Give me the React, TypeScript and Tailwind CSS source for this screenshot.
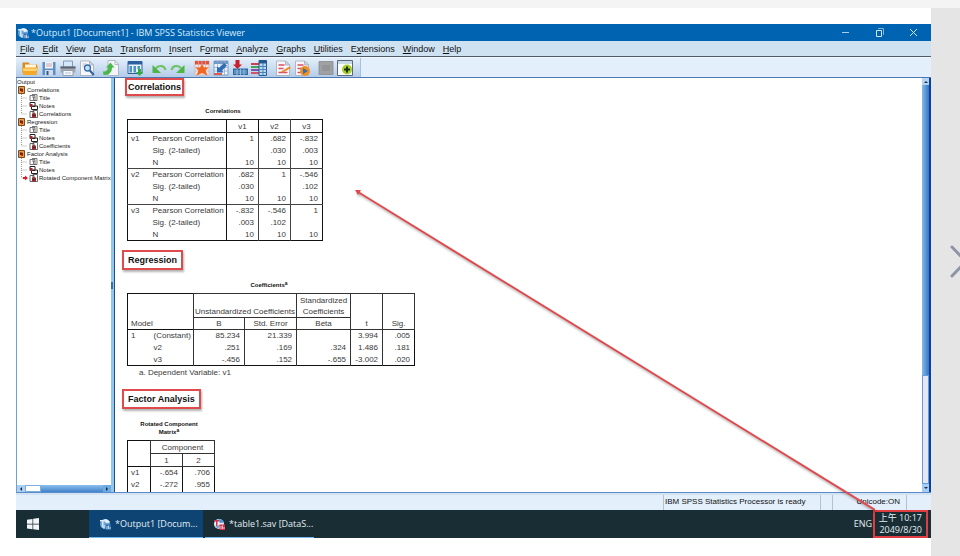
import type { ReactNode } from "react";

const menus: [string, string, string][] = [
  ["", "F", "ile"],
  ["", "E", "dit"],
  ["", "V", "iew"],
  ["", "D", "ata"],
  ["", "T", "ransform"],
  ["", "I", "nsert"],
  ["F", "o", "rmat"],
  ["", "A", "nalyze"],
  ["", "G", "raphs"],
  ["", "U", "tilities"],
  ["E", "x", "tensions"],
  ["", "W", "indow"],
  ["", "H", "elp"],
];

const Page = () => (
  <>
    <path d="M1.500 1h9l4 4v10.500h-13z" fill="#f7f7fa" stroke="#a3abba" strokeWidth=".8" />
    <path d="M10.500 1v4h4z" fill="#d5dae4" stroke="#a3abba" strokeWidth=".8" />
  </>
);

const toolGroups: { label: string; art: ReactNode }[][] = [
  [
    {
      label: "Open",
      art: (
        <>
          <path d="M.5 2.500h6l1.500 2h7v8H.5z" fill="#d98a1c" />
          <path d="M3 4.500h11v4H3z" fill="#fff6dc" />
          <path d="M0 7.500h13l3-1.500-1.500 9H1z" fill="#f3a82c" />
          <path d="M1 8.500h12.500l1.500-.7-.6 3.200H1.400z" fill="#fcd272" />
        </>
      ),
    },
    {
      label: "Save",
      art: (
        <>
          <path d="M1.500 2h13v13h-13z" fill="#5e8ec6" />
          <path d="M4 2h8v6.500H4z" fill="#f1f4f9" />
          <path d="M5 4h6M5 6h6" stroke="#c08a9a" strokeWidth=".8" />
          <path d="M4 10h8v5H4z" fill="#d5dbe4" />
          <path d="M5.500 11h2v4h-2z" fill="#335a91" />
        </>
      ),
    },
    {
      label: "Print",
      art: (
        <>
          <path d="M3.500 1h9v6h-9z" fill="#d3e9fb" stroke="#71869d" strokeWidth=".8" />
          <path d="M.5 6.500h15v6H.5z" fill="#a3abb5" />
          <path d="M.5 6.500h15v2H.5z" fill="#5b636e" />
          <path d="M3 10.500h10v5H3z" fill="#f5f8fb" stroke="#87919e" strokeWidth=".8" />
          <path d="M5 13h6" stroke="#9fb6cf" strokeWidth=".8" />
        </>
      ),
    },
    {
      label: "Print Preview",
      art: (
        <>
          <Page />
          <path d="M3.500 4h4M3.500 6h2" stroke="#b5bcc9" />
          <circle cx="8.500" cy="8" r="3" fill="#bfe0f7" stroke="#386ba5" strokeWidth="1.300" />
          <path d="M10.800 10.500l4 4.500" stroke="#3264a4" strokeWidth="2.200" />
        </>
      ),
    },
  ],
  [
    {
      label: "Export",
      art: (
        <>
          <path d="M5 .5h7l3.500 4v11H5z" fill="#f4f5f9" stroke="#a3abba" strokeWidth=".8" />
          <path d="M12 .5v4h3.500" fill="none" stroke="#a3abba" strokeWidth=".8" />
          <path d="M0 10.500c4 0 5-2 5-4H3l4.500-5 4 5H9c0 5-3.500 8-8.500 7.500z" fill="#4cb84c" transform="translate(0 1)" />
        </>
      ),
    },
  ],
  [
    {
      label: "Recall Dialog",
      art: (
        <>
          <path d="M1 1.500h14v12H1z" fill="#e8f3fb" stroke="#2d5f9e" />
          <path d="M1 1.500h14v3H1z" fill="#2d5f9e" />
          <path d="M2.500 6H5v6.500H2.500zM6.500 6H9v6.500H6.500zM10.500 6H13v3h-2.500z" fill="#4b92c6" />
          <path d="M11 9h3v3h2l-3.500 4L9 12h2z" fill="#32ae3e" />
        </>
      ),
    },
  ],
  [
    {
      label: "Undo",
      art: (
        <>
          <path d="M1.500 5v8H10z" fill="#4fb545" />
          <path d="M4.500 8.500C8 4.500 13.500 5.500 14.500 10" fill="none" stroke="#6cc25c" strokeWidth="2" />
        </>
      ),
    },
    {
      label: "Redo",
      art: (
        <>
          <path d="M14.500 5v8H6z" fill="#4fb545" />
          <path d="M11.500 8.500C8 4.500 2.500 5.500 1.500 10" fill="none" stroke="#6cc25c" strokeWidth="2" />
        </>
      ),
    },
  ],
  [
    {
      label: "Go to Data",
      art: (
        <>
          <path d="M1 1h14v14H1z" fill="#f3e3e2" stroke="#c9a9aa" strokeWidth=".6" />
          <path d="M1 1h14v3.500H1z" fill="#e2503c" />
          <path d="M4.500 1v14M8 1v4M11.500 1v14M1 7.500h14M1 11h14" stroke="#c9b4ba" strokeWidth=".7" />
          <path d="M8 4l2 3.500h4.500L11.500 10.500 13.500 15.500 8 13l-5.500 2.500 2-5-3-3H6z" fill="#f2661f" />
        </>
      ),
    },
    {
      label: "Go to Case",
      art: (
        <>
          <path d="M1 1h14v14H1z" fill="#eef4fa" stroke="#6d8fba" strokeWidth=".8" />
          <path d="M1 1h14v3H1z" fill="#7097c6" />
          <path d="M4.500 1v14M8 1v14M11.500 1v14M1 7.500h14M1 11h14" stroke="#8ba8cd" strokeWidth=".7" />
          <path d="M4 12.500V6.500l2 1.500 5-5 3 2.500-5 5 1.500 2z" fill="#2f6cb5" />
          <path d="M1 13h8v2H1z" fill="#dc5a50" />
        </>
      ),
    },
    {
      label: "Go to Variable",
      art: (
        <>
          <path d="M1 8.500h15V15H1z" fill="#2f6ba6" />
          <path d="M2 11h13M2 13h13M5 9v6M8.500 9v6M12 9v6" stroke="#a5cae6" strokeWidth=".8" />
          <path d="M3.500 0h4v4.500H10L5.500 9 1 4.500h2.500z" fill="#c9202d" />
        </>
      ),
    },
    {
      label: "Variables",
      art: (
        <>
          <path d="M0 3h9v2H0z" fill="#d63c51" />
          <path d="M0 6h9v2H0z" fill="#42a45a" />
          <path d="M0 9h9v2H0z" fill="#7a53ab" />
          <path d="M0 12h9v2H0z" fill="#d95069" />
          <path d="M8 .5h7.500v15H8z" fill="#b9d9ef" stroke="#24588f" />
          <path d="M8 .5h7.500v3H8z" fill="#24588f" />
          <path d="M8 6.500h7.500M8 9.500h7.500M8 12.500h7.500M12 3v12" stroke="#4b83b7" />
        </>
      ),
    },
  ],
  [
    {
      label: "Edit Script",
      art: (
        <>
          <Page />
          <path d="M3.500 5h6M3.500 8.500h5M3.500 12.500h9" stroke="#d85363" strokeWidth="1.500" />
          <path d="M6 11.500l8.500-5L16 8l-8 4.500z" fill="#ee8a2e" />
        </>
      ),
    },
    {
      label: "Run Script",
      art: (
        <>
          <Page />
          <path d="M3.500 5h6M3.500 8.500h4M3.500 12.500h4" stroke="#d85363" strokeWidth="1.500" />
          <circle cx="11" cy="11" r="5" fill="#f09022" />
          <path d="M9 8l5 3-5 3z" fill="#386fa8" />
        </>
      ),
    },
  ],
  [
    {
      label: "Designate Window",
      art: (
        <>
          <path d="M1 1.500h14v13H1z" fill="#a0a1a3" stroke="#8a8c90" strokeWidth=".8" />
          <path d="M4 5h8v6H4z" fill="#949598" />
        </>
      ),
    },
    {
      label: "Add Output",
      art: (
        <>
          <path d="M.5.500h15v15H.5z" fill="#fbfcfe" stroke="#5b6979" />
          <path d="M1 1h14v3H1z" fill="#cbd9e7" />
          <circle cx="10" cy="9.500" r="5" fill="#a7cf2c" />
          <path d="M10 6.500v6M7 9.500h6" stroke="#183006" strokeWidth="2" />
        </>
      ),
    },
  ],
];

const outline = [
  { name: "Correlations", items: ["Title", "Notes", "Correlations"] },
  { name: "Regression", items: ["Title", "Notes", "Coefficients"] },
  { name: "Factor Analysis", items: ["Title", "Notes", "Rotated Component Matrix"] },
];

const correlations = [
  ["v1", "Pearson Correlation", "1", ".682", "-.832"],
  ["", "Sig. (2-tailed)", "", ".030", ".003"],
  ["", "N", "10", "10", "10"],
  ["v2", "Pearson Correlation", ".682", "1", "-.546"],
  ["", "Sig. (2-tailed)", ".030", "", ".102"],
  ["", "N", "10", "10", "10"],
  ["v3", "Pearson Correlation", "-.832", "-.546", "1"],
  ["", "Sig. (2-tailed)", ".003", ".102", ""],
  ["", "N", "10", "10", "10"],
];

const coefficients = [
  ["1", "(Constant)", "85.234", "21.339", "", "3.994", ".005"],
  ["", "v2", ".251", ".169", ".324", "1.486", ".181"],
  ["", "v3", "-.456", ".152", "-.655", "-3.002", ".020"],
];

const components = [
  ["v1", "-.654", ".706"],
  ["v2", "-.272", ".955"],
  ["", "", ""],
];

const tableClass =
  "table-fixed border-collapse border border-[#111] text-[8px] leading-[11px] text-[#3a3a3a]";
const captionClass = "pb-1 pr-1 text-[6px] font-bold leading-[8px] text-[#111]";
const line = "border border-[#333]";

function AppLogo({ red = false }: { red?: boolean }) {
  const main = red ? "#d92c49" : "#dbe9f6";
  return (
    <svg viewBox="0 0 12 12" className="size-3 shrink-0" aria-hidden="true">
      <circle cx="6" cy="6" r="5" fill={red ? "#e9edf3" : "#6da5d6"} />
      <path d="M1 2h5v1.500H4.500V9H3V3.500H1z" fill={main} />
      <path d="M5 1.500c3-1 5 .5 6 3L7 5z" fill={red ? "#4d94cb" : "#eaf3fb"} />
      <path d="M2 8l3 3 2-4z" fill={red ? "#6ca4cf" : "#c1dbef"} />
      <path d="M6.500 6.500H12V12H6.500z" fill={red ? "#d92c49" : "#2b6db0"} />
      <path d="M8 8v3M9.500 7.500V11M11 9v2" stroke="#fff" strokeWidth=".7" />
    </svg>
  );
}

function LeafIcon({ kind }: { kind: number }) {
  return (
    <svg viewBox="0 0 9 8" className="h-2 w-[9px] shrink-0" aria-hidden="true">
      {kind === 0 && (
        <>
          <path d="M1 1.500h5v5H1zM3 .5h5v6H5" fill="#fff" stroke="#555" strokeWidth=".8" />
          <path d="M3 3h3M4.500 3v3" stroke="#555" strokeWidth=".8" />
        </>
      )}
      {kind === 1 && (
        <>
          <path d="M1 .5h5v4H1zM2.500 4h6v3.500h-6z" fill="#fff" stroke="#222" />
          <path d="M1 2h2.500v3H1z" fill="#a6262e" />
        </>
      )}
      {kind === 2 && (
        <>
          <path d="M1 1.500h4v6H1zM4 .5h4.500v7H4z" fill="#fff" stroke="#444" strokeWidth=".8" />
          <path d="M3 3.500h4v4H3z" fill="#b3272f" />
          <path d="M5 3v4M3 5.500h4" stroke="#333" strokeWidth=".7" />
        </>
      )}
    </svg>
  );
}

function Heading({ children, tight = false }: { children: ReactNode; tight?: boolean }) {
  return (
    <div className={tight ? "flex pl-[10px]" : "flex pl-[7px]"}>
      <h2
        className={
          "border-2 border-[#df4a4d] text-[9px] font-bold text-[#111] shadow-[1px_2px_2px_rgba(0,0,0,0.3)] " +
          (tight ? "px-px leading-[14px]" : "px-1 leading-4")
        }
      >
        {children}
      </h2>
    </div>
  );
}

function Outline() {
  return (
    <aside className="flex w-[95px] shrink-0 flex-col border-l border-[#6fa3cf] bg-white text-[6px] leading-[8px] text-[#222]">
      <div className="min-h-0 flex-1 overflow-hidden whitespace-nowrap">
        <p>Output</p>
        {outline.map((group, g) => (
          <div key={g}>
            <div className="flex items-center gap-[2px] pl-px">
              <svg viewBox="0 0 7 8" className="h-2 w-[7px]" aria-hidden="true">
                <path d="M.5.500h6v7h-6z" fill="#ee9c43" stroke="#7c4a1d" />
                <path d="M2 2l3 1v3L2 5z" fill="#7b2416" />
              </svg>
              {group.name}
            </div>
            {group.items.map((item, i) => {
              const current = g === 2 && i === 2;
              return (
                <div key={item} className="flex items-center gap-px pl-1">
                  <svg viewBox="0 0 7 8" className="h-2 w-[7px] shrink-0" aria-hidden="true">
                    <path d={i === 2 ? "M.5 0v4h6" : "M.5 0v8M.5 4h6"} fill="none" stroke="#9a9a9a" strokeDasharray="1 1" />
                    {current && <path d="M2 3h2V1.500L7 4 4 6.500V5H2z" fill="#d81e28" />}
                  </svg>
                  <LeafIcon kind={i} />
                  {item}
                </div>
              );
            })}
          </div>
        ))}
      </div>
      <div className="flex h-[7px] items-stretch bg-gradient-to-b from-[#8dc0ec] to-[#3f83cb]">
        <button aria-label="Scroll left" className="flex w-2 items-center justify-center bg-[#a9cff2]">
          <svg viewBox="0 0 4 4" className="size-1"><path d="M3 0v4L1 2z" fill="#123" /></svg>
        </button>
        <span className="w-4 border border-[#7eaedb] bg-white" />
        <span className="flex-1" />
        <button aria-label="Scroll right" className="flex w-2 items-center justify-center bg-[#6caae2]">
          <svg viewBox="0 0 4 4" className="size-1"><path d="M1 0v4l2-2z" fill="#123" /></svg>
        </button>
      </div>
    </aside>
  );
}

function CorrelationsTable() {
  return (
    <table className={tableClass + " w-[195px]"}>
      <caption className={captionClass}>Correlations</caption>
      <colgroup>
        <col className="w-[24px]" />
        <col className="w-[75px]" />
        <col className="w-8" />
        <col className="w-8" />
        <col className="w-8" />
      </colgroup>
      <thead>
        <tr className="h-[13px] border-b border-[#111]">
          <th colSpan={2} />
          <th className="border-x border-[#111] font-normal">v1</th>
          <th className="border-x border-[#444] font-normal">v2</th>
          <th className="font-normal">v3</th>
        </tr>
      </thead>
      <tbody>
        {correlations.map((row, i) => (
          <tr key={i} className={i % 3 === 0 ? "h-3 border-t border-[#444]" : "h-3"}>
            <td className="pl-[3px]">{row[0]}</td>
            <td className="whitespace-nowrap pl-px">{row[1]}</td>
            <td className="border-l border-[#111] pr-1 text-right">{row[2]}</td>
            <td className="border-x border-[#444] pr-1 text-right">{row[3]}</td>
            <td className="pr-1 text-right">{row[4]}</td>
          </tr>
        ))}
      </tbody>
    </table>
  );
}

function CoefficientsTable() {
  return (
    <table className={tableClass + " w-[287px]"}>
      <caption className={captionClass}>
        Coefficients<sup className="text-[5px] leading-none">a</sup>
      </caption>
      <colgroup>
        <col className="w-6" />
        <col className="w-[42px]" />
        <col className="w-[51px]" />
        <col className="w-[52px]" />
        <col className="w-[54px]" />
        <col className="w-8" />
        <col className="w-8" />
      </colgroup>
      <thead className="border-b border-[#111]">
        <tr className="h-6 align-bottom">
          <th colSpan={2} rowSpan={2} className="pl-[3px] text-left font-normal">Model</th>
          <th colSpan={2} className={line + " whitespace-nowrap font-normal"}>Unstandardized Coefficients</th>
          <th className={line + " font-normal"}>Standardized Coefficients</th>
          <th rowSpan={2} className={line + " font-normal"}>t</th>
          <th rowSpan={2} className={line + " font-normal"}>Sig.</th>
        </tr>
        <tr className="h-3">
          <th className={line + " font-normal"}>B</th>
          <th className={line + " font-normal"}>Std. Error</th>
          <th className={line + " font-normal"}>Beta</th>
        </tr>
      </thead>
      <tbody>
        {coefficients.map((row, i) => (
          <tr key={i} className="h-3">
            <td className="pl-[3px]">{row[0]}</td>
            <td className="pl-[2px]">{row[1]}</td>
            {row.slice(2).map((value, c) => (
              <td key={c} className="border-l border-[#333] pr-1 text-right">{value}</td>
            ))}
          </tr>
        ))}
      </tbody>
    </table>
  );
}

function ComponentTable() {
  return (
    <table className={tableClass + " w-[87px]"}>
      <caption className={captionClass}>
        Rotated Component
        <br />
        Matrix<sup className="text-[5px] leading-none">a</sup>
      </caption>
      <colgroup>
        <col className="w-[23px]" />
        <col className="w-8" />
        <col className="w-8" />
      </colgroup>
      <thead className="border-b border-[#111]">
        <tr className="h-[13px]">
          <th rowSpan={2} />
          <th colSpan={2} className={line + " font-normal"}>Component</th>
        </tr>
        <tr className="h-[13px]">
          <th className={line + " font-normal"}>1</th>
          <th className={line + " font-normal"}>2</th>
        </tr>
      </thead>
      <tbody>
        {components.map((row, i) => (
          <tr key={i} className="h-3">
            <td className="pl-[3px]">{row[0]}</td>
            <td className="border-l border-[#111] pr-1 text-right">{row[1]}</td>
            <td className="border-l border-[#111] pr-1 text-right">{row[2]}</td>
          </tr>
        ))}
      </tbody>
    </table>
  );
}

function VerticalScrollbar() {
  return (
    <div className="flex w-[9px] shrink-0 flex-col border-r-2 border-[#0b3f9c] bg-gradient-to-r from-[#86bbe8] to-[#3374c6]">
      <button aria-label="Scroll up" className="flex h-[7px] items-center justify-center bg-[#b4d4f4]">
        <svg viewBox="0 0 4 4" className="size-1"><path d="M0 3h4L2 1z" fill="#234" /></svg>
      </button>
      <span className="flex-[292]" />
      <span className="flex-[108] border border-[#5f9ede] bg-[#e6e6f2]" />
      <button aria-label="Scroll down" className="flex h-2 items-center justify-center bg-[#a5ccf2]">
        <svg viewBox="0 0 4 4" className="size-1"><path d="M0 1h4L2 3z" fill="#234" /></svg>
      </button>
    </div>
  );
}

export default function App() {
  return (
    <div className="flex h-screen flex-col overflow-hidden bg-[#f4f4f4] pt-2 font-['Liberation_Sans',Arial,sans-serif]">
      <div className="flex min-h-0 flex-1">
        <div className="flex min-w-0 flex-1 bg-white pb-[18px] pl-4 pt-4">
          <div className="relative flex min-w-0 flex-1 flex-col">
            <header className="flex h-[17px] shrink-0 items-center bg-[#0063b1] pl-px font-['Open_Sans','Noto_Sans',sans-serif] text-[9px] text-[#dcebf8]">
              <AppLogo />
              <h1 className="flex-1 whitespace-nowrap pl-[2px]">*Output1 [Document1] - IBM SPSS Statistics Viewer</h1>
              <div className="flex items-center gap-[25px] pr-[13px]">
                <button aria-label="Minimize">
                  <svg viewBox="0 0 9 9" className="size-[9px]"><path d="M1 4.500h7" stroke="#a4cdee" /></svg>
                </button>
                <button aria-label="Restore">
                  <svg viewBox="0 0 9 9" className="size-[9px]" fill="none" stroke="#cfe6f8">
                    <path d="M1.500 2.500h5v6h-5z" />
                    <path d="M3 .5h5.500V7" stroke="#7fb6c8" />
                  </svg>
                </button>
                <button aria-label="Close">
                  <svg viewBox="0 0 9 9" className="size-[9px]"><path d="M1 1l7 7M8 1L1 8" stroke="#cfe6f8" /></svg>
                </button>
              </div>
            </header>

            <nav className="flex h-4 shrink-0 items-center gap-2 border-b border-[#4d5a70] bg-[#cfe2f1] pl-1 text-[9px] leading-3 text-[#111]">
              {menus.map(([pre, key, post]) => (
                <button key={pre + key + post}>
                  {pre}
                  <span className="underline">{key}</span>
                  {post}
                </button>
              ))}
            </nav>

            <div className="flex h-[21px] shrink-0 border-b border-t border-b-[#4c78b4] border-t-[#f4f8fc] bg-[#e3f0fc]">
              <div className="flex items-center gap-2 border-r border-[#a8c0dc] bg-gradient-to-b from-[#e4f0fb] to-[#b4cce8] pl-[6px] pr-[7px]">
                {toolGroups.map((group, g) => (
                  <div key={g} className="flex gap-[3px]">
                    {group.map((tool) => (
                      <button key={tool.label} aria-label={tool.label}>
                        <svg viewBox="0 0 16 16" className="size-4">{tool.art}</svg>
                      </button>
                    ))}
                  </div>
                ))}
              </div>
            </div>

            <div className="flex min-h-0 flex-1 border-b border-[#5c8bcb]">
              <Outline />
              <div className="flex w-1 shrink-0 items-center border-r border-[#274b8d] bg-[#8fc8ea]">
                <span className="h-[7px] w-0.5 bg-[#3b6ea6]" />
              </div>
              <main className="min-w-0 flex-1 overflow-hidden bg-white">
                <Heading tight>Correlations</Heading>
                <div className="pb-[9px] pl-3 pt-[11px]">
                  <CorrelationsTable />
                </div>
                <Heading>Regression</Heading>
                <div className="pb-[10px] pl-3 pt-[11px]">
                  <CoefficientsTable />
                  <p className="pl-3 pt-px text-[8px] leading-3 text-[#3a3a3a]">a. Dependent Variable: v1</p>
                </div>
                <Heading>Factor Analysis</Heading>
                <div className="pl-3 pt-[11px]">
                  <ComponentTable />
                </div>
              </main>
              <VerticalScrollbar />
            </div>

            <div className="flex h-[17px] shrink-0 justify-end border-t-2 border-[#d3e3f2] bg-[#e3f0fc] text-[8px] leading-[14px] text-[#111]">
              <p className="w-[158px] whitespace-nowrap border-x border-[#b3c2d2] pl-px">IBM SPSS Statistics Processor is ready</p>
              <span className="w-3 border-r border-[#b3c2d2]" />
              <p className="w-[74px] border-r border-[#b3c2d2] pr-[6px] text-right">Unicode:ON</p>
              <span className="w-6" />
            </div>

            <footer className="flex h-7 shrink-0 bg-[#192d35] font-['Open_Sans','Noto_Sans','Noto_Sans_CJK_TC',sans-serif] text-[9px] text-[#e4edf2]">
              <button aria-label="Start" className="flex w-[73px] items-center pl-[11px]">
                <svg viewBox="0 0 12 12" className="size-3" fill="#f2f6f8">
                  <path d="M0 1.700l5.500-.8v4.800H0zM6.200.8L12 0v5.700H6.200zM0 6.400h5.500v4.800L0 10.400zM6.200 6.400H12V12l-5.800-.8z" />
                </svg>
              </button>
              <button className="flex w-[114px] items-center gap-1 border-b border-[#76b9ed] bg-[#0d4474] pl-[10px]">
                <AppLogo />
                *Output1 [Docum...
              </button>
              <button className="ml-0.5 flex w-[109px] items-center gap-1 border-b border-[#76b9ed] pl-2">
                <AppLogo red />
                *table1.sav [DataS...
              </button>
              <div className="flex flex-1 items-center justify-end">
                <span>ENG</span>
                <time className="ml-px mr-[3px] h-7 w-[55px] border-2 border-[#df3d41] pr-1 text-right leading-3">
                  上午 10:17
                  <br />
                  2049/8/30
                </time>
              </div>
            </footer>

            {/* callout from the results to the clock */}
            <svg
              viewBox="0 0 520 322"
              className="pointer-events-none absolute bottom-7 right-[56px] h-[322px] w-[520px] drop-shadow-[1px_2px_1px_rgba(0,0,0,0.3)]"
              aria-hidden="true"
            >
              <path d="M3 4l517 318" stroke="#e04a4d" strokeWidth="2" />
              <path d="M0 2l6 0-3 5z" fill="#e04a4d" />
            </svg>
          </div>
        </div>

        <aside className="flex w-[29px] shrink-0 justify-end overflow-hidden bg-[#e5e5e5] pt-[236px]">
          <button aria-label="Next" className="h-9 w-[11px] overflow-hidden">
            <svg viewBox="0 0 20 36" className="h-9 w-5" fill="none" stroke="#8d94a6" strokeWidth="3" strokeLinecap="round">
              <path d="M3 3l14 14.500L3 32" />
            </svg>
          </button>
        </aside>
      </div>
    </div>
  );
}
